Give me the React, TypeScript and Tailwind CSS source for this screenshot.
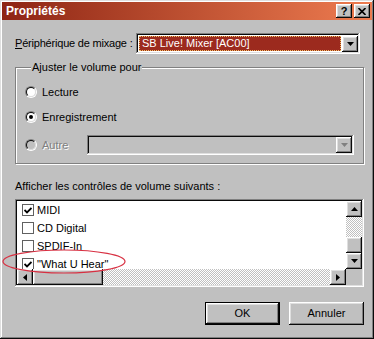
import React from 'react';

const raised =
  'shadow-[inset_-1px_-1px_#0a0a0a,inset_1px_1px_#ffffff,inset_-2px_-2px_#808080,inset_2px_2px_#dfdfdf]';
const sunken =
  'shadow-[inset_-1px_-1px_#ffffff,inset_1px_1px_#808080,inset_-2px_-2px_#dfdfdf,inset_2px_2px_#0a0a0a]';
const dither =
  'bg-[image:repeating-conic-gradient(#c0c0c0_0%_25%,#ffffff_0%_50%)] bg-[length:2px_2px]';

function Arrow({ dir, color = '#000' }: { dir: 'up' | 'down' | 'left' | 'right'; color?: string }) {
  const pts: Record<string, string> = {
    up: '3.5,0 7,4 0,4',
    down: '0,0 7,0 3.5,4',
    left: '4,0 4,7 0,3.5',
    right: '0,0 4,3.5 0,7',
  };
  const vertical = dir === 'up' || dir === 'down';
  return (
    <svg width={vertical ? 7 : 4} height={vertical ? 4 : 7} viewBox={vertical ? '0 0 7 4' : '0 0 4 7'}>
      <polygon points={pts[dir]} fill={color} />
    </svg>
  );
}

function ScrollButton({ dir, disabled }: { dir: 'up' | 'down' | 'left' | 'right'; disabled?: boolean }) {
  return (
    <div className={`flex h-[16px] w-[16px] shrink-0 items-center justify-center bg-[#c0c0c0] ${raised}`}>
      <Arrow dir={dir} color={disabled ? '#808080' : '#000'} />
    </div>
  );
}

function Radio({ checked, disabled }: { checked?: boolean; disabled?: boolean }) {
  return (
    <div className="h-[12px] w-[12px] shrink-0 rounded-full border border-t-[#808080] border-l-[#808080] border-b-white border-r-white">
      <div
        className={`flex h-full w-full items-center justify-center rounded-full border border-t-[#0a0a0a] border-l-[#0a0a0a] border-b-[#dfdfdf] border-r-[#dfdfdf] ${
          disabled ? 'bg-[#c0c0c0]' : 'bg-white'
        }`}
      >
        {checked && <div className="h-[4px] w-[4px] rounded-full bg-black" />}
      </div>
    </div>
  );
}

function Check({ checked }: { checked?: boolean }) {
  return (
    <div className="flex h-[12px] w-[12px] shrink-0 items-center justify-center border border-[#606060] bg-white">
      {checked && (
        <svg width="8" height="7" viewBox="0 0 8 7">
          <path d="M0.5 3 L3 5.5 L7.5 1" stroke="#000" strokeWidth="1.8" fill="none" />
        </svg>
      )}
    </div>
  );
}

const items = [
  { label: 'MIDI', checked: true },
  { label: 'CD Digital', checked: false },
  { label: 'SPDIF-In', checked: false },
  { label: '"What U Hear"', checked: true },
];

export default function App() {
  return (
    <div
      className={`relative flex h-[339px] w-[374px] flex-col bg-[#c0c0c0] p-[2px] font-['Liberation_Sans',Arial,sans-serif] text-[11px] leading-[13px] text-black shadow-[inset_-1px_-1px_#0a0a0a,inset_1px_1px_#dfdfdf,inset_-2px_-2px_#808080,inset_2px_2px_#ffffff]`}
    >
      {/* title bar */}
      <div className="flex h-[18px] items-center justify-between bg-linear-to-r from-[#8e2414] to-[#ee7c50] pl-[4px] pr-[2px]">
        <span className="text-[12px] font-bold text-white">Propriétés</span>
        <div className="flex items-center gap-[2px]">
          <div className={`flex h-[14px] w-[16px] items-center justify-center bg-[#c0c0c0] text-[11px] font-bold leading-none ${raised}`}>
            ?
          </div>
          <div className={`flex h-[14px] w-[16px] items-center justify-center bg-[#c0c0c0] ${raised}`}>
            <svg width="8" height="7" viewBox="0 0 8 7">
              <path d="M0.5 0 L7.5 7 M7.5 0 L0.5 7" stroke="#000" strokeWidth="1.6" />
            </svg>
          </div>
        </div>
      </div>

      <div className="flex flex-col pl-[13px] pr-[8px]">
        {/* mixer device */}
        <div className="mt-[13px] flex h-[21px] items-center">
          <span className="w-[121px] shrink-0 whitespace-nowrap tracking-[-0.2px]">
            <span className="underline">P</span>ériphérique de mixage :
          </span>
          <div className={`flex h-[21px] w-[224px] items-center bg-white p-[2px] ${sunken}`}>
            <div className="flex h-full flex-1 items-center p-[1px]">
              <div className="flex h-full flex-1 items-center border border-dotted border-[#f0c060] bg-[#9c2a1e] pl-[2px] text-white">
                SB Live! Mixer [AC00]
              </div>
            </div>
            <ScrollButton dir="down" />
          </div>
        </div>

        {/* volume group */}
        <fieldset className="mt-[7px] h-[103px] border border-[#808080] px-[9px] pb-[8px] shadow-[1px_1px_0_#ffffff,inset_1px_1px_0_#ffffff]">
          <legend className="ml-[6px] bg-[#c0c0c0] px-[1px]">Ajuster le volume pour</legend>
          <div className="mt-[10px] flex h-[16px] items-center gap-[5px]">
            <Radio />
            <span>Lecture</span>
          </div>
          <div className="mt-[9px] flex h-[16px] items-center gap-[5px]">
            <Radio checked />
            <span>Enregistrement</span>
          </div>
          <div className="mt-[10px] flex h-[20px] items-center">
            <div className="flex w-[62px] items-center gap-[5px]">
              <Radio disabled />
              <span className="text-[#808080] [text-shadow:1px_1px_0_#ffffff]">Autre</span>
            </div>
            <div className={`flex h-[20px] flex-1 items-center justify-end bg-[#c0c0c0] p-[2px] ${sunken}`}>
              <ScrollButton dir="down" disabled />
            </div>
          </div>
        </fieldset>

        <div className="mt-[16px] whitespace-nowrap">Afficher les contrôles de volume suivants :</div>

        {/* list */}
        <div className={`mt-[6px] flex h-[88px] flex-col bg-white p-[2px] ${sunken}`}>
          <div className="flex min-h-0 flex-1">
            <div className="flex-1 overflow-hidden">
              {items.map((it) => (
                <div key={it.label} className="flex h-[18px] items-center gap-[3px] pl-[5px]">
                  <Check checked={it.checked} />
                  <span>{it.label}</span>
                </div>
              ))}
            </div>
            <div className="flex w-[16px] flex-col">
              <ScrollButton dir="up" />
              <div className={`h-[20px] ${dither}`} />
              <div className={`h-[16px] bg-[#c0c0c0] ${raised}`} />
              <div className={`flex-1 ${dither}`} />
              <ScrollButton dir="down" />
            </div>
          </div>
          <div className="flex h-[16px]">
            <ScrollButton dir="left" />
            <div className={`h-[16px] w-[70px] bg-[#c0c0c0] ${raised}`} />
            <div className={`flex-1 ${dither}`} />
            <ScrollButton dir="right" />
            <div className="h-[16px] w-[16px] bg-[#c0c0c0]" />
          </div>
        </div>

        {/* buttons */}
        <div className="mt-[15px] flex justify-end gap-[9px]">
          <div className="h-[23px] w-[75px] border border-black">
            <div className={`flex h-full w-full items-center justify-center bg-[#c0c0c0] ${raised}`}>OK</div>
          </div>
          <div className={`flex h-[23px] w-[75px] items-center justify-center bg-[#c0c0c0] ${raised}`}>Annuler</div>
        </div>
      </div>

      {/* annotation */}
      <svg className="absolute left-[2px] top-[249px]" width="124" height="25" viewBox="0 0 124 25">
        <ellipse cx="62" cy="12.5" rx="61" ry="11.5" fill="none" stroke="#d83042" strokeWidth="1.2" />
      </svg>
    </div>
  );
}
